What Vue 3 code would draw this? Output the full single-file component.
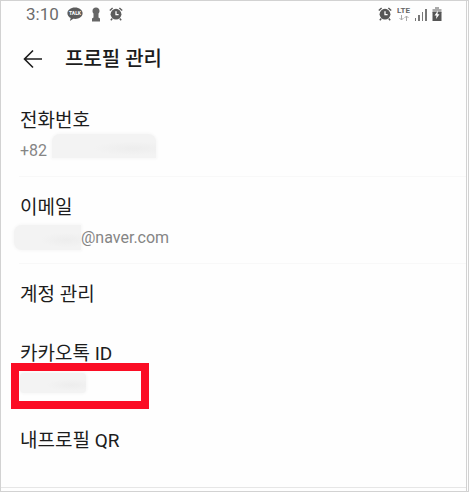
<template>
  <div class="screen">
    <div class="status-bar">
      <div class="status-group">
        <span class="time">3:10</span>
        <svg class="talk" width="16" height="15" viewBox="0 0 16 15" aria-hidden="true">
          <path d="M8 0.5C3.7 0.5 0.4 3 0.4 6.2c0 2.1 1.3 3.8 3.3 4.800L2.900 14l3.400-2.200c.6.1 1.100.1 1.700.1 4.300 0 7.600-2.500 7.600-5.700S12.300.5 8 .5z" fill="#5c5c5c" />
          <text x="8" y="8" text-anchor="middle">TALK</text>
        </svg>
        <svg width="10" height="15" viewBox="0 0 10 15" aria-hidden="true">
          <path d="M5 0.500C2.800.5 1.500 2 1.500 4c0 1.200.4 2 1 2.600V10.500L1 11.500V14.500H9V11.500L7.500 10.500V6.600c.6-.6 1-1.400 1-2.600C8.500 2 7.200.5 5 .5z" fill="#666" />
        </svg>
        <svg width="14" height="14" viewBox="0 0 14 14" aria-hidden="true">
          <g fill="none" stroke="#5c5c5c" stroke-width="1.400">
            <path d="M0.800 3.500 3.600 1M13.200 3.500 10.400 1M3.300 11.500 1.800 13.300M10.700 11.500l1.500 1.800" />
          </g>
          <circle cx="7" cy="7.200" r="5.400" fill="#5c5c5c" />
          <path d="M7 4.300v3.300h2.600" fill="none" stroke="#fff" stroke-width="1.300" />
        </svg>
      </div>
      <div class="status-group right">
        <svg width="14" height="14" viewBox="0 0 14 14" aria-hidden="true">
          <g fill="none" stroke="#555" stroke-width="1.400">
            <path d="M0.800 3.500 3.600 1M13.200 3.500 10.400 1M3.300 11.500 1.800 13.300M10.700 11.500l1.500 1.800" />
          </g>
          <circle cx="7" cy="7.200" r="5.400" fill="#555" />
          <path d="M7 4.300v3.300h2.600" fill="none" stroke="#fff" stroke-width="1.300" />
        </svg>
        <div class="network">
          <span>LTE</span>
          <svg width="10" height="6" viewBox="0 0 10 6" aria-hidden="true">
            <path d="M2.500 0v5M.5 3l2 2 2-2M7.500 6V1M5.500 3l2-2 2 2" fill="none" stroke="#aaa" />
          </svg>
        </div>
        <svg width="12" height="13" viewBox="0 0 12 13" aria-hidden="true">
          <path d="M0 10h1v3H0zM3 7h2v6H3zM7 4h1v9H7zM10 1h2v12h-2z" fill="#777" />
        </svg>
        <svg width="10" height="14" viewBox="0 0 10 14" aria-hidden="true">
          <path d="M3 0h4v2h2.500v4H.5V2H3z" fill="#aaa" />
          <path d="M.5 5h9v9h-9z" fill="#555" />
          <path d="M6 3.500 2.500 8.500h2L4 12l3.500-4.800h-2z" fill="#fff" />
        </svg>
      </div>
    </div>

    <header class="header">
      <button class="back-btn" aria-label="뒤로">
        <svg width="20" height="20" viewBox="0 0 20 20" fill="none" stroke="#1c1c1c" stroke-width="1.600">
          <path d="M19 10H1.500M10 1.500 1.500 10l8.500 8.500" />
        </svg>
      </button>
      <h1>프로필 관리</h1>
    </header>

    <main>
      <section class="row divided">
        <h2>전화번호</h2>
        <p class="value">+82 <span class="mask phone"></span></p>
      </section>
      <section class="row divided">
        <h2>이메일</h2>
        <p class="value"><span class="mask email"></span>@naver.com</p>
      </section>
      <section class="row">
        <h2>계정 관리</h2>
      </section>
      <section class="row kakao">
        <h2>카카오톡 ID</h2>
        <p class="value"><span class="mask account"></span></p>
        <div class="highlight"></div>
      </section>
      <section class="row">
        <h2>내프로필 QR</h2>
      </section>
    </main>
    <div class="bottom-line"></div>
  </div>
</template>

<script setup>
</script>

<style>
body {
  background: #fff;
}
</style>

<style scoped>
.screen {
  box-sizing: border-box;
  min-height: 100vh;
  display: flex;
  flex-direction: column;
  border: 1px solid #d2d2d2;
  border-right: 3px double #d2d2d2;
  background: #fefefe;
  font-family: Roboto, "Noto Sans CJK KR", sans-serif;
  color: #1c1c1c;
}

/* status bar */
.status-bar {
  display: flex;
  justify-content: space-between;
  align-items: center;
  height: 26px;
  padding: 0 24px 0 25px;
}
.status-group {
  display: flex;
  align-items: center;
  gap: 8px;
}
.status-group.right {
  gap: 5px;
}
.time {
  font-size: 17px;
  line-height: 26px;
  color: #6c6c6c;
}
.talk text {
  font: bold 5px Roboto, sans-serif;
  fill: #fff;
}
.network {
  display: flex;
  flex-direction: column;
  align-items: center;
  font-size: 8px;
  line-height: 8px;
  font-weight: 700;
  color: #666;
}

/* header */
.header {
  display: flex;
  align-items: center;
  gap: 22px;
  height: 63px;
  padding-left: 22px;
}
.back-btn {
  display: flex;
  padding: 0;
  border: none;
  background: none;
  cursor: pointer;
}
h1 {
  margin: 0;
  font-size: 20px;
  line-height: 28px;
  font-weight: 500;
}

/* rows */
.row {
  padding: 17px 19px 14px;
}
.divided {
  border-bottom: 1px solid transparent;
  border-image: linear-gradient(to right, transparent 19px, #f8f8f8 19px) 1;
}
h2 {
  margin: 0;
  font-size: 19px;
  line-height: 28px;
  font-weight: 400;
}
.value {
  display: flex;
  align-items: center;
  height: 24px;
  margin: 3px 0 0;
  font-size: 16px;
  color: #858585;
}
.mask {
  border-radius: 8px;
  background:
    radial-gradient(ellipse at 78% 60%, #ededed, transparent 35%),
    #f3f3f3;
  box-shadow: 0 0 3px 1px #f6f6f6;
}
.phone {
  align-self: flex-end;
  width: 104px;
  height: 24px;
  margin: 0 0 4px 5px;
  border-radius: 8px 8px 0 0;
}
.email {
  width: 67px;
  height: 25px;
  margin-left: -6px;
  border-radius: 8px 0 0 8px;
}
.account {
  width: 66px;
  height: 20px;
  border-radius: 4px;
}
.kakao {
  position: relative;
  padding-bottom: 15px;
}
.highlight {
  position: absolute;
  top: 40px;
  left: 10px;
  box-sizing: border-box;
  width: 138px;
  height: 46px;
  border: 8px solid #fb0d25;
}
.bottom-line {
  margin-top: auto;
  margin-bottom: 3px;
  border-top: 1px solid #e6e6e6;
}
</style>
